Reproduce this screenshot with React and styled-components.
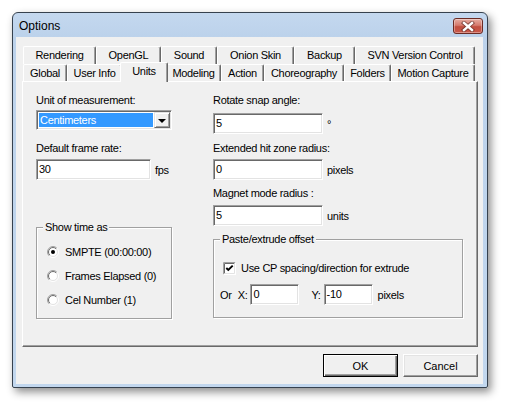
import React from 'react';
import styled, { createGlobalStyle } from 'styled-components';

const Global = createGlobalStyle`
  html, body { margin: 0; padding: 0; background: #ffffff; }
  body {
    font-family: "Liberation Sans", Arial, sans-serif;
    font-size: 11px;
    letter-spacing: -0.3px;
    color: #000;
  }
  * { box-sizing: border-box; }
`;

const Page = styled.div`
  width: 507px;
  height: 407px;
  padding: 12px;
`;

const Window = styled.div`
  width: 476px;
  height: 376px;
  border: 1px solid #36414e;
  border-radius: 6px 6px 2px 2px;
  background: linear-gradient(#c4d8ef, #bcd2eb 24px, #c2d7ee);
  padding: 0 4px 3px 3px;
  box-shadow: 3px 4px 9px rgba(0, 0, 0, 0.45);
  display: flex;
  flex-direction: column;
`;

const TitleBar = styled.div`
  height: 24px;
  display: flex;
  justify-content: space-between;
  align-items: flex-start;
`;

const Title = styled.div`
  font-size: 12px;
  letter-spacing: 0;
  line-height: 14px;
  padding: 6px 0 0 3px;
`;

const CloseButton = styled.div`
  width: 30px;
  height: 16px;
  margin-top: 5px;
  border: 1px solid #6b2b24;
  border-radius: 3px;
  background: linear-gradient(#e6ada2, #d67a6d 45%, #c24f40 55%, #c9584a);
  box-shadow: inset 0 0 0 1px rgba(255, 255, 255, 0.35);
  display: flex;
  align-items: center;
  justify-content: center;
`;

const Client = styled.div`
  flex: 1;
  background: #f0f0f0;
  padding: 9px 5px 0 6px;
  display: flex;
  flex-direction: column;
`;

const TabRow = styled.div`
  display: flex;
  height: ${p => p.$h}px;
  margin-left: 1px;
  width: 452px;
`;

const Tab = styled.div`
  position: relative;
  z-index: ${p => (p.$sel ? 2 : 1)};
  width: ${p => p.$w + (p.$sel ? 4 : 0)}px;
  height: ${p => (p.$sel ? p.$h + 3 : p.$h)}px;
  margin: ${p => (p.$sel ? '-2px -2px 0 -2px' : '0')};
  background: #f0f0f0;
  border-top: 1px solid #ffffff;
  border-left: 1px solid #ffffff;
  border-right: 1px solid #696969;
  border-radius: 2px 2px 0 0;
  box-shadow: inset -1px 0 0 #a0a0a0;
  padding-top: 2px;
  line-height: 13px;
  text-align: center;
  white-space: nowrap;
`;

const Panel = styled.div`
  width: 456px;
  height: 266px;
  background: #f0f0f0;
  border-top: 1px solid #ffffff;
  border-left: 1px solid #ffffff;
  border-right: 1px solid #696969;
  border-bottom: 1px solid #696969;
  box-shadow: inset -1px -1px 0 #a0a0a0;
  padding: 12px 0 0 13px;
  display: flex;
`;

const Column = styled.div`
  width: ${p => p.$w}px;
  margin-left: ${p => p.$ml || 0}px;
  display: flex;
  flex-direction: column;
`;

const Label = styled.div`
  line-height: 13px;
  margin-top: ${p => p.$mt || 0}px;
  white-space: nowrap;
`;

const FieldRow = styled.div`
  display: flex;
  align-items: center;
  gap: 4px;
  margin-top: ${p => p.$mt || 0}px;
  white-space: nowrap;
`;

const Edit = styled.div`
  width: ${p => p.$w}px;
  height: 21px;
  margin-left: ${p => p.$ml || 0}px;
  background: #ffffff;
  border: 1px solid;
  border-color: #a0a0a0 #ffffff #ffffff #a0a0a0;
  box-shadow: inset 1px 1px 0 #696969, inset -1px -1px 0 #e3e3e3;
  padding-left: 2px;
  line-height: 19px;
`;

const Combo = styled.div`
  width: 136px;
  height: 20px;
  margin-top: 3px;
  background: #ffffff;
  border: 1px solid;
  border-color: #a0a0a0 #ffffff #ffffff #a0a0a0;
  box-shadow: inset 1px 1px 0 #696969, inset -1px -1px 0 #e3e3e3;
  padding: 1px;
  display: flex;
`;

const ComboValue = styled.div`
  flex: 1;
  margin: 1px;
  background: #3399ff;
  color: #ffffff;
  line-height: 14px;
  padding-left: 1px;
`;

const DropButton = styled.div`
  width: 16px;
  height: 16px;
  background: #f0f0f0;
  border: 1px solid;
  border-color: #e3e3e3 #696969 #696969 #e3e3e3;
  box-shadow: inset 1px 1px 0 #ffffff, inset -1px -1px 0 #a0a0a0;
  display: flex;
  align-items: center;
  justify-content: center;
`;

const Arrow = styled.div`
  width: 0;
  height: 0;
  border-left: 4px solid transparent;
  border-right: 4px solid transparent;
  border-top: 4px solid #000;
  margin-top: 1px;
`;

const Group = styled.fieldset`
  margin: ${p => p.$mt}px 0 0 0;
  padding: 0;
  width: ${p => p.$w}px;
  height: ${p => p.$h}px;
  min-width: 0;
  border: 1px solid #a0a0a0;
  box-shadow: inset 1px 1px 0 #ffffff, 1px 1px 0 #ffffff;
`;

const Legend = styled.legend`
  margin-left: 6px;
  padding: 0 2px;
  line-height: 13px;
  background: #f0f0f0;
`;

const GroupBody = styled.div`
  padding: ${p => p.$pt}px 0 0 ${p => p.$pl}px;
  display: flex;
  flex-direction: column;
`;

const RadioRow = styled.div`
  height: 24px;
  display: flex;
  align-items: center;
  gap: 6px;
  white-space: nowrap;
`;

const CheckRow = styled.div`
  height: 20px;
  display: flex;
  align-items: center;
  gap: 5px;
  margin-left: 3px;
  white-space: nowrap;
`;

const OffsetRow = styled.div`
  display: flex;
  align-items: center;
  margin-top: 6px;
  white-space: nowrap;
`;

const Text = styled.span`
  margin-left: ${p => p.$ml || 0}px;
`;

const ButtonBar = styled.div`
  display: flex;
  justify-content: flex-end;
  gap: 5px;
  margin-top: 7px;
  width: 456px;
`;

const Button = styled.div`
  width: 75px;
  height: 23px;
  background: #f0f0f0;
  border: 1px solid;
  border-color: ${p => (p.$default ? '#000000' : '#ffffff #696969 #696969 #ffffff')};
  box-shadow: ${p =>
    p.$default
      ? 'inset 1px 1px 0 #ffffff, inset -1px -1px 0 #696969, inset -2px -2px 0 #a0a0a0'
      : 'inset -1px -1px 0 #a0a0a0, inset 1px 1px 0 #e3e3e3'};
  display: flex;
  align-items: center;
  justify-content: center;
  letter-spacing: 0;
`;

const Radio = ({ checked }) => (
  <svg width="12" height="12" viewBox="0 0 12 12">
    <defs>
      <linearGradient id="ro" x1="0" y1="0" x2="1" y2="1">
        <stop offset="0.45" stopColor="#a0a0a0" />
        <stop offset="0.55" stopColor="#ffffff" />
      </linearGradient>
      <linearGradient id="ri" x1="0" y1="0" x2="1" y2="1">
        <stop offset="0.45" stopColor="#696969" />
        <stop offset="0.55" stopColor="#e3e3e3" />
      </linearGradient>
    </defs>
    <circle cx="6" cy="6" r="5.5" fill="none" stroke="url(#ro)" strokeWidth="1" />
    <circle cx="6" cy="6" r="4.5" fill="#ffffff" stroke="url(#ri)" strokeWidth="1" />
    {checked && <circle cx="6" cy="6" r="2" fill="#000" />}
  </svg>
);

const Checkbox = () => (
  <svg width="13" height="13" viewBox="0 0 13 13">
    <rect x="0" y="0" width="13" height="13" fill="#ffffff" />
    <path d="M0.5 12.5 V0.5 H12.5" fill="none" stroke="#a0a0a0" />
    <path d="M0.5 12.5 H12.5 V0.5" fill="none" stroke="#ffffff" />
    <path d="M1.5 11.5 V1.5 H11.5" fill="none" stroke="#696969" />
    <path d="M1.5 11.5 H11.5 V1.5" fill="none" stroke="#e3e3e3" />
    <path d="M3.3 6 L5.3 8 L9.7 3.6" fill="none" stroke="#000" strokeWidth="1.9" />
  </svg>
);

const CloseGlyph = () => (
  <svg width="14" height="11" viewBox="0 0 14 11">
    <path d="M3 2 L11 9 M11 2 L3 9" stroke="#5b2a24" strokeWidth="4.2" strokeLinecap="square" opacity="0.7" />
    <path d="M3 2 L11 9 M11 2 L3 9" stroke="#ffffff" strokeWidth="2.4" strokeLinecap="square" />
  </svg>
);

const topTabs = [
  ['Rendering', 73],
  ['OpenGL', 65],
  ['Sound', 56],
  ['Onion Skin', 77],
  ['Backup', 61],
  ['SVN Version Control', 120],
];

const bottomTabs = [
  ['Global', 44],
  ['User Info', 55],
  ['Units', 44],
  ['Modeling', 55],
  ['Action', 43],
  ['Choreography', 80],
  ['Folders', 47],
  ['Motion Capture', 84],
];

export default function App() {
  return (
    <Page>
      <Global />
      <Window>
        <TitleBar>
          <Title>Options</Title>
          <CloseButton>
            <CloseGlyph />
          </CloseButton>
        </TitleBar>
        <Client>
          <TabRow $h={18}>
            {topTabs.map(([t, w]) => (
              <Tab key={t} $w={w} $h={18}>{t}</Tab>
            ))}
          </TabRow>
          <TabRow $h={17}>
            {bottomTabs.map(([t, w]) => (
              <Tab key={t} $w={w} $h={17} $sel={t === 'Units'}>{t}</Tab>
            ))}
          </TabRow>
          <Panel>
            <Column $w={136}>
              <Label>Unit of measurement:</Label>
              <Combo>
                <ComboValue>Centimeters</ComboValue>
                <DropButton><Arrow /></DropButton>
              </Combo>
              <Label $mt={12}>Default frame rate:</Label>
              <FieldRow $mt={4}>
                <Edit $w={115}>30</Edit>
                <span>fps</span>
              </FieldRow>
              <Group $mt={41} $w={136} $h={98}>
                <Legend>Show time as</Legend>
                <GroupBody $pt={6} $pl={10}>
                  <RadioRow><Radio checked /><span>SMPTE (00:00:00)</span></RadioRow>
                  <RadioRow><Radio /><span>Frames Elapsed (0)</span></RadioRow>
                  <RadioRow><Radio /><span>Cel Number (1)</span></RadioRow>
                </GroupBody>
              </Group>
            </Column>
            <Column $w={250} $ml={41}>
              <Label>Rotate snap angle:</Label>
              <FieldRow $mt={6}>
                <Edit $w={110}>5</Edit>
                <span>°</span>
              </FieldRow>
              <Label $mt={8}>Extended hit zone radius:</Label>
              <FieldRow $mt={4}>
                <Edit $w={110}>0</Edit>
                <span>pixels</span>
              </FieldRow>
              <Label $mt={7}>Magnet mode radius :</Label>
              <FieldRow $mt={5}>
                <Edit $w={110}>5</Edit>
                <span>units</span>
              </FieldRow>
              <Group $mt={7} $w={250} $h={85}>
                <Legend>Paste/extrude offset</Legend>
                <GroupBody $pt={12} $pl={6}>
                  <CheckRow>
                    <Checkbox />
                    <span>Use CP spacing/direction for extrude</span>
                  </CheckRow>
                  <OffsetRow>
                    <Text>Or</Text>
                    <Text $ml={6}>X:</Text>
                    <Edit $w={49} $ml={3}>0</Edit>
                    <Text $ml={12}>Y:</Text>
                    <Edit $w={49} $ml={3}>-10</Edit>
                    <Text $ml={5}>pixels</Text>
                  </OffsetRow>
                </GroupBody>
              </Group>
            </Column>
          </Panel>
          <ButtonBar>
            <Button $default>OK</Button>
            <Button>Cancel</Button>
          </ButtonBar>
        </Client>
      </Window>
    </Page>
  );
}
